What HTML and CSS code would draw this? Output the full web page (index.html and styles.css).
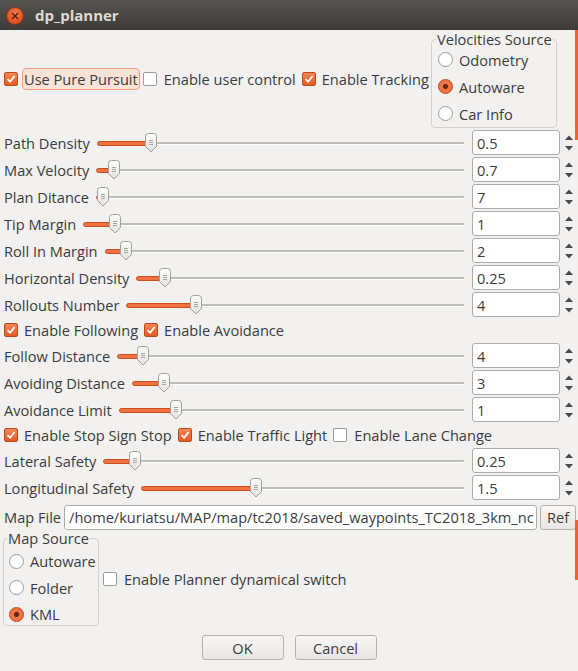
FILE: index.html
```html
<!DOCTYPE html>
<html>
<head>
<meta charset="utf-8">
<link rel="stylesheet" href="styles.css">
</head>
<body>
<svg class="defs" width="0" height="0">
  <defs>
    <symbol id="handle" viewBox="0 0 14 20">
      <defs>
        <linearGradient id="hg" x1="0" y1="0" x2="0" y2="1">
          <stop offset="0" stop-color="#fdfdfc"/>
          <stop offset="1" stop-color="#e4e2df"/>
        </linearGradient>
      </defs>
      <path d="M1.5 3.5 Q1.5 0.5 4.5 0.5 H9.5 Q12.5 0.5 12.5 3.5 V13.5 L7 19 L1.5 13.5 Z" fill="url(#hg)" stroke="#a19f9b"/>
      <path d="M5 7.5 H9 M5 9.5 H9 M5 11.5 H9" stroke="#a9a7a3" stroke-width="1"/>
    </symbol>
    <symbol id="tick" viewBox="0 0 14 14">
      <path d="M3 7.2 L6 10.2 L11.2 3.6" fill="none" stroke="#fff" stroke-width="2"/>
    </symbol>
    <symbol id="arrows" viewBox="0 0 14 24">
      <path d="M3 9 L7 4.5 L11 9 Z" fill="#4a4a4a"/>
      <path d="M3 15 L7 19.5 L11 15 Z" fill="#4a4a4a"/>
    </symbol>
  </defs>
</svg>

<div class="titlebar">
  <span class="close"><svg width="8" height="8" viewBox="0 0 8 8"><path d="M1 1 L7 7 M7 1 L1 7" stroke="#5a1a08" stroke-width="1.4"/></svg></span>
  <span class="title">dp_planner</span>
</div>

<div class="content">
  <div class="top">
    <div class="checks">
      <span class="check"><span class="box on"><svg><use href="#tick"/></svg></span><span class="focus">Use Pure Pursuit</span></span>
      <span class="check"><span class="box"></span><span class="ctext wide">Enable user control</span></span>
      <span class="check"><span class="box on"><svg><use href="#tick"/></svg></span><span class="ctext">Enable Tracking</span></span>
    </div>
    <fieldset class="group vel">
      <legend>Velocities Source</legend>
      <div class="rrow"><span class="radio"></span>Odometry</div>
      <div class="rrow"><span class="radio on"></span>Autoware</div>
      <div class="rrow"><span class="radio"></span>Car Info</div>
    </fieldset>
  </div>

  <div class="srow"><span class="lbl">Path Density</span><div class="slider" style="--v:54px"><div class="groove"></div><div class="fill"></div><svg class="handle"><use href="#handle"/></svg></div><div class="spin">0.5</div><svg class="arr"><use href="#arrows"/></svg></div>
  <div class="srow"><span class="lbl">Max Velocity</span><div class="slider" style="--v:18px"><div class="groove"></div><div class="fill"></div><svg class="handle"><use href="#handle"/></svg></div><div class="spin">0.7</div><svg class="arr"><use href="#arrows"/></svg></div>
  <div class="srow"><span class="lbl">Plan Ditance</span><div class="slider" style="--v:7px"><div class="groove"></div><div class="fill"></div><svg class="handle"><use href="#handle"/></svg></div><div class="spin">7</div><svg class="arr"><use href="#arrows"/></svg></div>
  <div class="srow"><span class="lbl">Tip Margin</span><div class="slider" style="--v:32px"><div class="groove"></div><div class="fill"></div><svg class="handle"><use href="#handle"/></svg></div><div class="spin">1</div><svg class="arr"><use href="#arrows"/></svg></div>
  <div class="srow"><span class="lbl">Roll In Margin</span><div class="slider" style="--v:21px"><div class="groove"></div><div class="fill"></div><svg class="handle"><use href="#handle"/></svg></div><div class="spin">2</div><svg class="arr"><use href="#arrows"/></svg></div>
  <div class="srow"><span class="lbl">Horizontal Density</span><div class="slider" style="--v:29px"><div class="groove"></div><div class="fill"></div><svg class="handle"><use href="#handle"/></svg></div><div class="spin">0.25</div><svg class="arr"><use href="#arrows"/></svg></div>
  <div class="srow"><span class="lbl">Rollouts Number</span><div class="slider" style="--v:70px"><div class="groove"></div><div class="fill"></div><svg class="handle"><use href="#handle"/></svg></div><div class="spin">4</div><svg class="arr"><use href="#arrows"/></svg></div>

  <div class="crow">
    <span class="check"><span class="box on"><svg><use href="#tick"/></svg></span><span class="ctext">Enable Following</span></span>
    <span class="check"><span class="box on"><svg><use href="#tick"/></svg></span><span class="ctext">Enable Avoidance</span></span>
  </div>

  <div class="srow"><span class="lbl">Follow Distance</span><div class="slider" style="--v:26px"><div class="groove"></div><div class="fill"></div><svg class="handle"><use href="#handle"/></svg></div><div class="spin">4</div><svg class="arr"><use href="#arrows"/></svg></div>
  <div class="srow"><span class="lbl">Avoiding Distance</span><div class="slider" style="--v:32px"><div class="groove"></div><div class="fill"></div><svg class="handle"><use href="#handle"/></svg></div><div class="spin">3</div><svg class="arr"><use href="#arrows"/></svg></div>
  <div class="srow"><span class="lbl">Avoidance Limit</span><div class="slider" style="--v:57px"><div class="groove"></div><div class="fill"></div><svg class="handle"><use href="#handle"/></svg></div><div class="spin">1</div><svg class="arr"><use href="#arrows"/></svg></div>

  <div class="crow">
    <span class="check"><span class="box on"><svg><use href="#tick"/></svg></span><span class="ctext">Enable Stop Sign Stop</span></span>
    <span class="check"><span class="box on"><svg><use href="#tick"/></svg></span><span class="ctext">Enable Traffic Light</span></span>
    <span class="check"><span class="box"></span><span class="ctext wide">Enable Lane Change</span></span>
  </div>

  <div class="srow"><span class="lbl">Lateral Safety</span><div class="slider" style="--v:32px"><div class="groove"></div><div class="fill"></div><svg class="handle"><use href="#handle"/></svg></div><div class="spin">0.25</div><svg class="arr"><use href="#arrows"/></svg></div>
  <div class="srow"><span class="lbl">Longitudinal Safety</span><div class="slider" style="--v:115px"><div class="groove"></div><div class="fill"></div><svg class="handle"><use href="#handle"/></svg></div><div class="spin">1.5</div><svg class="arr"><use href="#arrows"/></svg></div>

  <div class="frow">
    <span class="flbl">Map File</span>
    <div class="path">/home/kuriatsu/MAP/map/tc2018/saved_waypoints_TC2018_3km_nc</div>
    <span class="btn ref">Ref</span>
  </div>

  <div class="bottom">
    <fieldset class="group msrc">
      <legend>Map Source</legend>
      <div class="rrow"><span class="radio"></span>Autoware</div>
      <div class="rrow"><span class="radio"></span>Folder</div>
      <div class="rrow"><span class="radio on"></span>KML</div>
    </fieldset>
    <span class="check dyn"><span class="box"></span><span class="ctext wide">Enable Planner dynamical switch</span></span>
  </div>

  <div class="buttons">
    <span class="btn">OK</span>
    <span class="btn">Cancel</span>
  </div>
</div>

<div class="edge e1"></div>
<div class="edge e2"></div>
</body>
</html>
```

FILE: styles.css
```css
* { box-sizing: border-box; }
html, body { margin: 0; padding: 0; }
body {
  width: 578px;
  height: 671px;
  overflow: hidden;
  position: relative;
  background: #f2f1f0;
  font-family: "Open Sans", "Noto Sans", sans-serif;
  font-size: 14.6px;
  color: #3c3c3c;
}
.defs { position: absolute; width: 0; height: 0; }

.titlebar {
  height: 30px;
  background: linear-gradient(#55544f, #3c3b37);
  display: flex;
  align-items: center;
  padding-left: 6px;
}
.close {
  width: 18px;
  height: 18px;
  border-radius: 50%;
  background: radial-gradient(circle at 50% 35%, #f47c50, #df4f20 70%);
  border: 1px solid #8f3412;
  display: flex;
  align-items: center;
  justify-content: center;
  margin-top: 2px;
}
.title {
  margin-left: 11px;
  color: #dfdbd2;
  font-weight: bold;
  font-size: 15px;
  font-family: "Open Sans", sans-serif;
}

.content { padding: 0 2px 0 4px; }

/* top area */
.top {
  height: 99px;
  display: flex;
  align-items: center;
  padding-right: 19px;
}
.checks { display: flex; align-items: center; margin-top: -2px; flex: none; }
.check { display: flex; align-items: center; white-space: nowrap; }
.box {
  width: 14px;
  height: 14px;
  border: 1px solid #9d9b98;
  border-radius: 2px;
  background: #fff;
  flex: none;
  display: flex;
}
.box.on {
  background: linear-gradient(#f38656, #e65b25);
  border-color: #bd4a18;
}
.box svg { width: 12px; height: 12px; }
.ctext { margin-left: 6px; margin-right: 6px; white-space: nowrap; }
.ctext.wide { margin-left: 7px; }
.checks .check:last-child .ctext { margin-right: 0; }
.focus {
  margin-left: 4px;
  margin-right: 3px;
  padding: 0 1px;
  height: 22px;
  line-height: 20px;
  border: 1px solid #f0a07c;
  border-radius: 4px;
  background: #f9e2d6;
  white-space: nowrap;
}

.group {
  margin: 0;
  border: 1px solid #d3d1ce;
  border-radius: 4px;
  padding: 0 0 0 3px;
  flex: none;
}
.group legend { padding: 0 1px; margin-left: 1px; line-height: 15px; white-space: nowrap; }
.vel { width: 126px; height: 96px; margin-top: 1px; margin-left: auto; }
.rrow { height: 27px; display: flex; align-items: center; white-space: nowrap; }
.radio {
  width: 15px;
  height: 15px;
  border-radius: 50%;
  border: 1px solid #9d9b98;
  background: #fff;
  margin: 0 6px 0 3px;
  flex: none;
}
.radio.on {
  background: radial-gradient(circle, #6b2812 0 2.3px, #ef7445 2.8px);
  border-color: #b8481a;
}
.vel .rrow:first-of-type { margin-top: -1px; }

/* slider rows */
.srow { height: 27px; display: flex; align-items: center; }
.lbl { white-space: nowrap; }
.slider {
  flex: 1;
  position: relative;
  height: 20px;
  margin: 0 8px 0 7px;
}
.groove {
  position: absolute;
  left: 1px;
  right: 0;
  top: 9px;
  height: 3px;
  border-top: 2px solid #bebcb8;
  border-bottom: 1px solid #fff;
  border-radius: 1px;
}
.fill {
  position: absolute;
  left: 0;
  top: 8px;
  height: 5px;
  width: var(--v);
  background: #ef7342;
  border: 1px solid #c9501d;
  border-radius: 3px;
}
.handle {
  position: absolute;
  top: 0;
  left: calc(var(--v) - 7px);
  width: 14px;
  height: 20px;
}
.spin {
  width: 88px;
  height: 25px;
  border: 1px solid #aeaca9;
  border-radius: 3px;
  background: #fff;
  padding-left: 4px;
  display: flex;
  align-items: center;
  flex: none;
}
.arr { width: 14px; height: 24px; margin-left: 2px; flex: none; }

.crow { height: 24px; display: flex; align-items: center; }

/* map file */
.frow { height: 28px; display: flex; align-items: center; margin-top: 2px; }
.flbl { margin-right: 3px; }
.path {
  flex: 1;
  height: 25px;
  border: 1px solid #aeaca9;
  border-radius: 3px;
  background: #fff;
  padding-left: 4px;
  white-space: nowrap;
  overflow: hidden;
  line-height: 23px;
}
.btn {
  display: flex;
  align-items: center;
  justify-content: center;
  height: 25px;
  border: 1px solid #b4b2ae;
  border-radius: 3px;
  background: linear-gradient(#f8f7f6, #e8e6e3);
}
.ref { width: 36px; margin-left: 3px; }

.bottom { display: flex; align-items: center; margin-top: 0; }
.msrc { width: 96px; height: 95px; margin-left: -1px; padding-left: 2px; }
.msrc .rrow { height: 26.5px; }
.msrc .rrow:first-of-type { margin-top: 2px; }
.dyn { margin-left: 4px; margin-bottom: 0; }

.buttons {
  display: flex;
  justify-content: center;
  gap: 11px;
  margin-top: 9px;
  margin-left: -2px;
}
.buttons .btn { width: 82px; }

.edge {
  position: absolute;
  right: 0;
  width: 3px;
  background: #e9652d;
}
.e1 { top: 30px; height: 110px; }
.e2 { top: 520px; height: 60px; }
```
